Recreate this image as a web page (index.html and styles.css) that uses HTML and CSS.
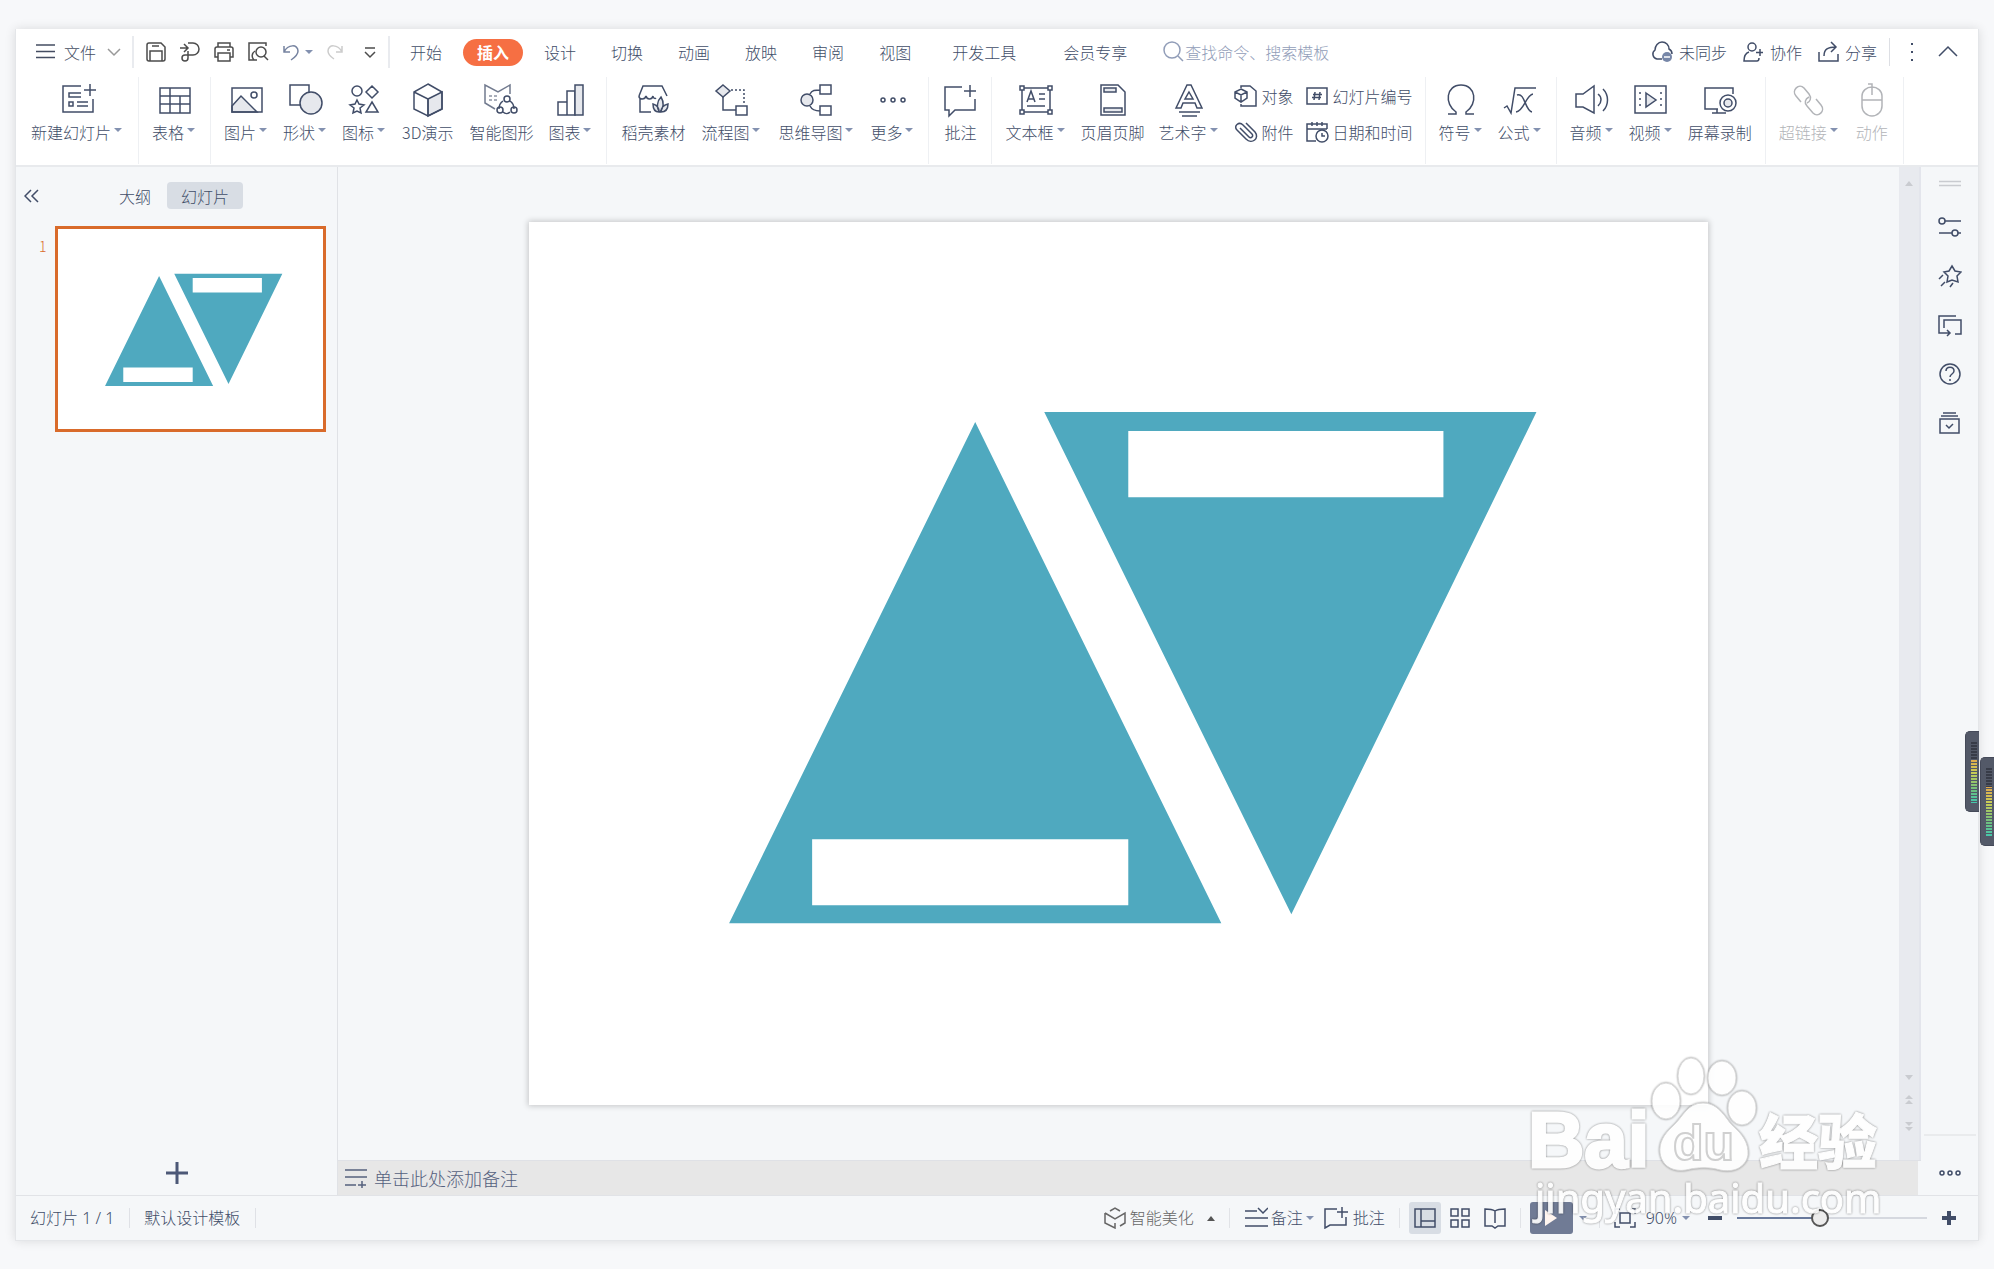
FILE: index.html
```html
<!DOCTYPE html>
<html lang="zh-CN">
<head>
<meta charset="utf-8">
<title>演示文稿</title>
<link rel="stylesheet" href="styles.css">
</head>
<body>
<svg class="defs" aria-hidden="true">
  <symbol id="shapes" viewBox="0 0 1178 883">
    <path fill="#4fa9bf" d="M446 200L692 701H200ZM515 190H1007L762 692Z"/>
    <path fill="#fff" d="M283 617H599V683H283ZM599 209H914V275H599Z"/>
  </symbol>
</svg>
<div class="window">
  <header class="header">
    <div class="menubar">
      <button class="file"><svg width="20" height="20" viewBox="0 0 20 20"><path d="M1 3H20M1 9.500H20M1 15.500H20"/></svg><span>文件</span><svg class="soft" width="14" height="20" viewBox="0 0 14 20"><path d="M1 7l6 6 6-6"/></svg></button>
      <div class="quick">
        <button aria-label="保存"><svg width="22" height="22" viewBox="0 0 22 22"><path d="M2 4a2 2 0 0 1 2-2H16l4 4V18a2 2 0 0 1-2 2H4a2 2 0 0 1-2-2ZM5 20V10H17V20M7 5H14"/></svg></button>
        <button aria-label="输出"><svg width="22" height="22" viewBox="0 0 22 22"><path d="M1 7H8M5 3l4 4-4 4M9 2H14a6 6 0 0 1 0 12H6a3 3 0 1 0 3 3V10"/></svg></button>
        <button aria-label="打印"><svg width="22" height="22" viewBox="0 0 22 22"><path d="M5 6V2H17V6M5 16H2V8a2 2 0 0 1 2-2H18a2 2 0 0 1 2 2V16H17M5 12H17V20H5ZM14 9H17"/></svg></button>
        <button aria-label="打印预览"><svg width="22" height="22" viewBox="0 0 22 22"><path d="M10 19H2V2H19V5M17 15l4 4M7 19C4 16 5 12 8 10"/><circle cx="14" cy="11" r="5"/></svg></button>
        <button aria-label="撤销" class="undo"><svg width="20" height="20" viewBox="0 0 20 20"><path d="M3 4V10H9M3 10C7 2 17 2 17 9c0 4-4 7-7 9"/></svg><i class="caret"></i></button>
        <button aria-label="恢复" class="redo"><svg width="20" height="20" viewBox="0 0 20 20"><path d="M17 4V10H11M17 10C13 2 3 2 3 9c0 3 3 6 6 8"/></svg></button>
        <button aria-label="更多"><svg width="14" height="20" viewBox="0 0 14 20"><path d="M2 6H12M2 10l5 5 5-5"/></svg></button>
      </div>
      <nav class="tabs">
        <button>开始</button><button class="on">插入</button><button>设计</button><button>切换</button><button>动画</button><button>放映</button><button>审阅</button><button>视图</button><button class="long">开发工具</button><button class="long">会员专享</button>
      </nav>
      <label class="search"><svg width="22" height="22" viewBox="0 0 22 22"><circle cx="9" cy="9" r="8"/><path d="M15 15l5 5"/></svg><input type="text" aria-label="搜索" placeholder="查找命令、搜索模板"></label>
      <div class="account">
        <button><svg width="24" height="24" viewBox="0 0 24 24"><path d="M12 19H7a5 5 0 0 1-2-9C5 6 8 2 12 2s7 3 7 7c2 1 3 3 3 5"/><circle cx="17" cy="17" r="5" fill="#7787a8" stroke="none"/><path stroke="#fff" d="M14 17h6"/></svg>未同步</button>
        <button><svg width="22" height="22" viewBox="0 0 22 22"><circle cx="9" cy="6" r="4"/><path d="M6 11c-3 1-5 4-5 9H14c1 0 2-1 2-3M17 8V15M13 11.500H20"/></svg>协作</button>
        <button><svg width="22" height="22" viewBox="0 0 22 22"><path d="M1 11V20H20V13M6 15C6 8 10 6 18 6M13 1l5 5-5 5"/></svg>分享</button>
      </div>
      <button class="dots" aria-label="更多选项"><svg width="6" height="20" viewBox="0 0 6 20"><path class="solid" d="M2 1h2v2h-2zM2 9h2v2h-2zM2 17h2v2h-2z"/></svg></button>
      <button class="fold" aria-label="收起功能区"><svg width="20" height="20" viewBox="0 0 20 20"><path d="M1 14l9-9 9 9"/></svg></button>
    </div>

    <div class="ribbon">
      <div class="group">
        <button class="tool wide"><svg viewBox="0 0 36 36"><path d="M21 4H3V30H33V17M30 2V14M24 8H36M21 11H9V15H21M17 20H28M17 24H28M9 20h4v4h-4z"/></svg><span>新建幻灯片<i class="caret"></i></span></button>
      </div>
      <div class="group">
        <button class="tool"><svg viewBox="0 0 36 36"><path d="M3 6H33V31H3ZM3 14H33M3 22H33M13 6V31M23 14V31"/></svg><span>表格<i class="caret"></i></span></button>
      </div>
      <div class="group">
        <button class="tool"><svg viewBox="0 0 36 36"><path class="tint" d="M3 24l9-10 16 16H3z"/><path d="M3 6H33V30H3Z"/><circle cx="25" cy="13" r="3"/></svg><span>图片<i class="caret"></i></span></button>
        <button class="tool"><svg viewBox="0 0 36 36"><path d="M2 3H21V23H2Z"/><circle class="tint" cx="23" cy="21" r="11"/></svg><span>形状<i class="caret"></i></span></button>
        <button class="tool"><svg viewBox="0 0 36 36"><circle cx="10" cy="9" r="5"/><path d="M25 4l6 6-6 6-6-6zM25 20l6 10H19zM10 18l2 4 5 1-4 3 1 5-4-2-4 2 1-5-4-3 5-1z"/></svg><span>图标<i class="caret"></i></span></button>
        <button class="tool wide"><svg viewBox="0 0 36 36"><path class="tint" d="M18 17l14-7v17l-14 7z"/><path d="M18 2l14 8v17l-14 7-14-7V10zM4 10l14 7v17"/></svg><span>3D演示</span></button>
        <button class="tool wide"><svg viewBox="0 0 36 36"><path d="M27 12V3L15 10 2 3V21l10 6" opacity=".75"/><path stroke-dasharray="3 2" opacity=".6" d="M6 14H15M6 18H15"/><path d="M20 19c-3 2-4 5-4 8M27 19c3 2 4 5 4 8M20 30c2 2 5 2 7 0"/><circle cx="24" cy="17" r="3"/><circle cx="17" cy="28" r="3"/><circle cx="31" cy="28" r="3"/></svg><span>智能图形</span></button>
        <button class="tool"><svg viewBox="0 0 36 36"><path d="M5 20h9v13H5zM14 9h8v24h-8z"/><path class="tint" d="M22 3h8v30h-8z"/></svg><span>图表<i class="caret"></i></span></button>
      </div>
      <div class="group">
        <button class="tool wide"><svg viewBox="0 0 36 36"><path d="M5 17V30H16M4 14L8 4H27l5 10M4 14c0 4 6 4 7 0 1 4 6 4 7 0 0 2 2 3 3 2"/><path class="tint" d="M25 30c-4-4-3-11 1-15 3 5 3 10-1 15zM24 30c-4 0-6-3-6-8 4 1 6 4 6 8zM26 30c0-5 3-7 7-8 0 5-2 8-7 8z"/></svg><span>稻壳素材</span></button>
        <button class="tool wide"><svg viewBox="0 0 36 36"><path class="tint" d="M9 3l7 6-7 6-7-6z"/><path d="M9 15V28H22M22 24H33V33H22Z"/><path stroke-dasharray="2 2" d="M17 8H30V23"/></svg><span>流程图<i class="caret"></i></span></button>
        <button class="tool wide"><svg viewBox="0 0 36 36"><circle class="tint" cx="8" cy="18" r="6"/><path d="M21 3H32V12H21ZM21 24H32V33H21ZM11 12c2-4 5-4 10-4M11 24c2 4 5 5 10 5"/></svg><span>思维导图<i class="caret"></i></span></button>
        <button class="tool"><svg viewBox="0 0 36 36"><circle cx="8" cy="18" r="2"/><circle cx="18" cy="18" r="2"/><circle cx="28" cy="18" r="2"/></svg><span>更多<i class="caret"></i></span></button>
      </div>
      <div class="group">
        <button class="tool"><svg viewBox="0 0 36 36"><path d="M20 5H3V28H7V34l6-6H33V17M28 3V15M22 9H34"/></svg><span>批注</span></button>
      </div>
      <div class="group">
        <button class="tool"><svg viewBox="0 0 36 36"><path d="M4 6H32V30H4ZM9 20l4-11 4 11M10 17h6M21 12H27M21 17H27M9 24H27"/><path fill="#fff" d="M2 4h4v4h-4zM30 4h4v4h-4zM2 28h4v4h-4zM30 28h4v4h-4z"/></svg><span>文本框<i class="caret"></i></span></button>
        <button class="tool"><svg viewBox="0 0 36 36"><path d="M6 3H23l7 7V33H6Z"/><path class="tint" d="M9 6H21V10H9ZM9 26H27V30H9Z"/></svg><span>页眉页脚</span></button>
        <button class="tool"><svg viewBox="0 0 36 36"><path d="M5 26L16 3h4l11 23H26l-2-5H12l-2 5ZM18 10l4 7h-8zM8 30H29M11 34H26"/></svg><span>艺术字<i class="caret"></i></span></button>
        <div class="minis">
          <button><svg viewBox="0 0 24 24"><path d="M7 4V2H16l6 5V22H7V20M7 5l6 3v6l-6 4-6-4V8zM1 8l6 3 6-3M7 11v7"/></svg>对象</button>
          <button><svg viewBox="0 0 24 24"><path d="M2 4H22V20H2ZM10 8l-1 8M15 8l-1 8M8 10.500h9M7 13.500h9"/></svg>幻灯片编号</button>
          <button><svg viewBox="0 0 24 24"><path d="M6 8l9 9c2 2 5-1 3-3L9 5C5 1-1 6 3 10l9 9c6 6 14-1 9-7l-9-9"/></svg>附件</button>
          <button><svg viewBox="0 0 24 24"><path d="M11 21H2V4H22V9M2 9H22M7 2V6M12 2V6M17 2V6"/><circle fill="#fff" cx="17" cy="16" r="6"/><path d="M17 13V16H20"/></svg>日期和时间</button>
        </div>
      </div>
      <div class="group">
        <button class="tool"><svg viewBox="0 0 36 36"><path d="M5 32h8v-2C1 22 3 3 18 3s17 19 5 27v2h8"/></svg><span>符号<i class="caret"></i></span></button>
        <button class="tool"><svg viewBox="0 0 36 36"><path d="M2 26l3-2 4 7 4-25H34M15 13c8-3 8 16 15 17M31 12c-7 1-9 17-17 18"/></svg><span>公式<i class="caret"></i></span></button>
      </div>
      <div class="group">
        <button class="tool"><svg viewBox="0 0 36 36"><path d="M2 12H9L20 4V31L9 25H2ZM24 12c4 3 4 8 0 12M29 7c6 6 6 16 0 22"/></svg><span>音频<i class="caret"></i></span></button>
        <button class="tool"><svg viewBox="0 0 36 36"><path d="M2 4H33V31H2Z"/><path class="tint" d="M13 11l10 7-10 7z"/><path stroke-dasharray="2 4" d="M7 10V27M28 10V27"/></svg><span>视频<i class="caret"></i></span></button>
        <button class="tool"><svg viewBox="0 0 36 36"><path d="M16 27H3V6H31V12M10 31H24M15 27V31"/><circle cx="26" cy="21" r="8" fill="#fff"/><circle class="tint" cx="26" cy="21" r="4"/></svg><span>屏幕录制</span></button>
      </div>
      <div class="group">
        <button class="tool" disabled><svg viewBox="0 0 36 36"><path d="M10 20L5 14C0 8 8 1 13 6l5 6c3 4 1 8-2 9M18 15c-4 2-5 6-2 9l6 7c5 5 13-2 8-8l-5-6"/></svg><span>超链接<i class="caret"></i></span></button>
        <button class="tool" disabled><svg viewBox="0 0 36 36"><path d="M8 14a10 9 0 0 1 20 0V24a10 10 0 0 1-20 0ZM8 18H28M18 13V2H14"/></svg><span>动作</span></button>
      </div>
    </div>
  </header>

  <main class="work">
    <aside class="outline">
      <div class="outline-head">
        <button aria-label="收起"><svg width="16" height="16" viewBox="0 0 16 16"><path d="M7 2L1 8l6 6M14 2L8 8l6 6"/></svg></button>
        <div class="views"><button>大纲</button><button class="on">幻灯片</button></div>
      </div>
      <div class="thumb-row"><span>1</span><div class="thumb"><svg viewBox="0 0 1178 883"><use href="#shapes"/></svg></div></div>
      <button class="add" aria-label="新建幻灯片"><svg width="24" height="24" viewBox="0 0 24 24"><path d="M1 12H23M12 1V23"/></svg></button>
    </aside>
    <section class="editor">
      <div class="stage">
        <div class="canvas"><div class="slide"><svg viewBox="0 0 1178 883"><use href="#shapes"/></svg></div></div>
        <div class="scroll">
          <svg width="10" height="8" viewBox="0 0 10 8"><path d="M1 6l4-5 4 5z"/></svg>
          <svg class="low" width="10" height="60" viewBox="0 0 10 60"><path d="M1 1l4 5 4-5zM1 25l4-4 4 4zM1 30l4-4 4 4zM1 48l4 4 4-4zM1 53l4 4 4-4z"/></svg>
        </div>
      </div>
      <label class="notes"><svg width="22" height="20" viewBox="0 0 22 20"><path d="M0 2H22M0 9H22M0 17H11M13 17H21M17 13V20"/></svg><input type="text" aria-label="备注" placeholder="单击此处添加备注"></label>
    </section>
    <aside class="rail">
      <svg class="grip" width="22" height="8" viewBox="0 0 22 8"><path d="M0 1.500H22M0 5.500H22"/></svg>
      <button aria-label="属性"><svg viewBox="0 0 24 24"><circle cx="4" cy="6" r="3"/><path d="M7 6H23M1 18H14M20 18H23"/><circle cx="17" cy="18" r="3"/></svg></button>
      <button aria-label="动画"><svg viewBox="0 0 24 24"><path d="M14 2l3 5 6 1-4 4 1 6-6-2-5 2 1-6-4-4 5-1zM5 11l-4 4M7 18l-4 4M15 19l-3 4"/></svg></button>
      <button aria-label="切换"><svg viewBox="0 0 24 24"><path d="M18 3H1V20H12M6 15V7H23V21H17M9 17l3 3-3 3"/></svg></button>
      <button aria-label="帮助"><svg viewBox="0 0 24 24"><circle cx="12" cy="12" r="10"/><path d="M8 9c0-5 8-5 8 0 0 3-4 3-4 6M12 17v2"/></svg></button>
      <button aria-label="模板"><svg viewBox="0 0 24 24"><path d="M2 8H21V22H2ZM3 5H20M5 2H18M8 14l3 3 4-4"/></svg></button>
      <button class="end" aria-label="更多"><svg viewBox="0 0 24 24"><circle cx="4" cy="12" r="2"/><circle cx="12" cy="12" r="2"/><circle cx="20" cy="12" r="2"/></svg></button>
    </aside>
  </main>

  <footer class="status">
    <span class="cell">幻灯片 1 / 1</span><span class="cell">默认设计模板</span>
    <div class="controls">
      <button class="beauty"><svg width="22" height="22" viewBox="0 0 22 22"><path d="M6 4l5-3 5 3M1 6l10 6 10-6V16l-5 3M1 6V16l10 5V16"/></svg>智能美化<i class="caret up"></i></button>
      <div class="pair">
        <button><svg width="24" height="22" viewBox="0 0 24 22"><path d="M1 4H13M1 11H24M1 19H24M14 1l5 5 5-5"/></svg>备注<i class="caret"></i></button>
        <button class="comment"><svg width="24" height="22" viewBox="0 0 24 22"><path d="M13 2H1V21l5-3H22V10M18 0V11M13 5H24"/></svg>批注</button>
      </div>
      <div class="modes">
        <button class="on" aria-label="普通视图"><svg width="22" height="22" viewBox="0 0 22 22"><path d="M1 2H21V20H1ZM7 2V20M7 14H21"/></svg></button>
        <button aria-label="幻灯片浏览"><svg width="22" height="22" viewBox="0 0 22 22"><path d="M2 2h7v7h-7zM13 2h7v7h-7zM2 13h7v7h-7zM13 13h7v7h-7z"/></svg></button>
        <button aria-label="阅读视图"><svg width="22" height="22" viewBox="0 0 22 22"><path d="M11 4C8 2 5 2 1 2V19H8l3 2 3-2H21V2C17 2 14 2 11 4ZM11 4V16"/></svg></button>
      </div>
      <div class="play"><button aria-label="放映"><svg width="14" height="18" viewBox="0 0 14 18"><path d="M1 1l12 8-12 8z"/></svg></button><i class="caret"></i></div>
      <div class="zoom">
        <button aria-label="适应窗口"><svg width="22" height="22" viewBox="0 0 22 22"><path d="M1 7V2H6M16 2H21V7M21 15V20H16M6 20H1V15M6 6H16V16H6Z"/></svg></button>
        <button class="percent">90%<i class="caret"></i></button>
        <button class="bold" aria-label="缩小"><svg width="14" height="14" viewBox="0 0 14 14"><path d="M0 7H14"/></svg></button>
        <input type="range" min="0" max="100" value="43" aria-label="缩放">
        <button class="bold" aria-label="放大"><svg width="14" height="14" viewBox="0 0 14 14"><path d="M0 7H14M7 0V14"/></svg></button>
      </div>
    </div>
  </footer>
</div>

<div class="meter back"><i></i></div>
<div class="meter front"><i></i></div>
<svg class="mark" width="370" height="180" viewBox="0 0 370 180">
  <g class="paw"><ellipse cx="141" cy="70" rx="14" ry="18"/><ellipse cx="166" cy="45" rx="13" ry="18"/><ellipse cx="197" cy="47" rx="14" ry="17"/><ellipse cx="217" cy="77" rx="14" ry="17"/><path d="M178 72C162 72 158 86 148 95S134 112 135 122c2 14 14 19 26 17 12-3 24-3 34 0 14 3 26-3 28-15 1-12-6-21-14-28S195 72 178 72Z"/></g>
  <text class="brand" x="3" y="136">Bai</text>
  <text class="du" x="148" y="129">du</text>
  <text class="cn" x="234" y="133">经验</text>
  <text class="url" x="10" y="182">jingyan.baidu.com</text>
</svg>
</body>
</html>
```
FILE: styles.css
```css
* { box-sizing: border-box; }
body {
  margin: 0;
  background: #f7f8fa;
  color: #414d68;
  font: 300 16px/24px "Noto Sans CJK SC", sans-serif;
  overflow: hidden;
}
button, input { font: inherit; color: inherit; background: none; border: 0; padding: 0; margin: 0; outline: 0; }
button { display: flex; align-items: center; white-space: nowrap; }
svg { fill: none; stroke: currentColor; stroke-width: 1.5; flex: none; display: block; }
.defs { position: absolute; width: 0; height: 0; }
.defs symbol { stroke: none; }
.tint { fill: #e6e8ed; }
.solid { fill: currentColor; stroke: none; }
.caret {
  flex: none;
  border: 4px solid transparent;
  border-top-color: #8391b0;
  border-bottom: 0;
}
.caret.up { border-top: 0; border-bottom: 5px solid #555; }

.window {
  min-height: calc(100vh - 57px);
  margin: 29px 15px 28px;
  display: flex;
  flex-direction: column;
  background: #f5f7f9;
  border: 1px solid #e4e6e9;
  border-top: 0;
  box-shadow: 0 0 10px rgba(0, 0, 0, .12);
}

/* header */
.header { background: #fff; border-bottom: 2px solid #e8eaed; }
.menubar { display: flex; align-items: center; height: 46px; padding-right: 20px; }
.file { padding: 0 11px 0 19px; height: 32px; border-right: 2px solid #e9ebef; color: #444d62; }
.file span { margin: 0 11px 0 9px; }
.soft { color: #999; }
.quick { display: flex; align-items: center; gap: 12px; height: 32px; padding: 0 11px; border-right: 2px solid #e9ebef; color: #4c4c4c; }
.undo { color: #7683a0; gap: 4px; }
.redo { color: #ccc; margin-right: 6px; }
.tabs { display: flex; gap: 7px; margin-left: 6px; }
.tabs button { height: 27px; padding: 0 14px; border-radius: 14px; }
.tabs .long { padding: 0 20px; }
.tabs .on { background: #f66f43; color: #fff; font-weight: 700; }
.search { display: flex; align-items: center; flex: 1; margin-left: 16px; color: #919db8; }
.search input { width: 180px; height: 24px; }
input::placeholder { color: inherit; opacity: 1; }
.account { display: flex; gap: 16px; height: 28px; padding-right: 12px; border-right: 1px solid #dddfe4; }
.account button { gap: 5px; }
.dots { margin-left: 19px; }
.fold { margin-left: 23px; }

.ribbon { display: flex; height: 90px; }
.group { display: flex; height: 87px; margin-top: 2px; padding: 0 6px; border-right: 1px solid #eef0f3; }
.group:first-child { padding-left: 7px; }
.tool { display: flex; flex-direction: column; padding: 5px 7px 0; }
.tool.wide { padding: 5px 8px 0; }
.tool > svg { width: 36px; height: 36px; }
.tool span { display: flex; align-items: center; margin-top: 2px; }
.tool .caret { margin: 0 2px 4px 3px; }
.tool:disabled { color: #b2b4b8; }
.minis { display: grid; grid-template-columns: auto auto; grid-auto-rows: 36px; column-gap: 11px; padding: 1px 6px 0 7px; height: 74px; }
.minis svg { width: 24px; height: 24px; }
.minis button { gap: 4px; }

/* work area */
.work { flex: 1; display: flex; }
.outline { width: 322px; flex: none; display: flex; flex-direction: column; border-right: 1px solid #e0e2e6; }
.outline-head { display: flex; align-items: center; padding: 15px 8px; }
.views { display: flex; gap: 16px; margin-left: 79px; }
.views button { height: 27px; }
.views .on { padding: 0 14px; border-radius: 4px; background: #d8dde4; }
.thumb-row { display: flex; padding: 2px 11px 0 23px; color: #d96b2b; font-size: 14px; line-height: 40px; }
.thumb-row span { width: 16px; }
.thumb { flex: 1; height: 206px; padding: 3px; background: #fff; border: 3px solid #d96b2b; }
.thumb svg, .slide svg { width: 100%; height: 100%; }
.add { margin: auto auto 10px; color: #4c5877; }
.add svg { stroke-width: 3; }
.editor { flex: 1; display: flex; flex-direction: column; min-width: 0; }
.stage { flex: 1; display: flex; border-bottom: 1px solid #dfe1e6; }
.canvas { flex: 1; display: grid; place-items: center; }
.slide { width: 75.5%; aspect-ratio: 1178 / 883; background: #fff; box-shadow: 0 0 6px 1px rgba(0, 0, 0, .2); }
.scroll { width: 22px; display: flex; flex-direction: column; justify-content: space-between; padding: 13px 0 26px 5px; background: #e8eaef; border-right: 2px solid #e3e5ec; }
.scroll svg { fill: #c9cbd0; stroke: none; }
.notes { display: flex; align-items: center; gap: 7px; height: 34px; margin-right: 3px; padding-left: 7px; background: #e7e7e7; color: #55617e; font-size: 18px; }
.notes input { flex: 1; }
.rail { width: 57px; display: flex; flex-direction: column; align-items: center; gap: 25px; padding-top: 13px; }
.rail button { justify-content: center; }
.rail button svg { width: 24px; height: 24px; }
.rail .grip { color: #c9cbd0; margin-bottom: 2px; }
.rail .end { width: 52px; height: 61px; margin-top: auto; padding-top: 14px; border-top: 2px solid #e9ebed; }

/* status bar */
.status { display: flex; align-items: center; height: 45px; border-top: 1px solid #e1e3e7; padding-right: 22px; font-family: "Noto Sans", "Noto Sans CJK SC", sans-serif; }
.cell { height: 20px; line-height: 20px; padding: 0 15px 0 14px; border-right: 1px solid #dfe1e6; }
.controls { display: flex; align-items: center; margin-left: auto; }
.beauty { gap: 4px; padding-right: 14px; color: #666; }
.beauty .caret { margin-left: 9px; }
.pair { display: flex; gap: 10px; padding: 0 14px; border: solid #e1e3e7; border-width: 0 1px; height: 20px; }
.pair button { gap: 3px; }
.pair .comment { gap: 5px; }
.modes { display: flex; gap: 3px; padding: 0 9px; border-right: 1px solid #e1e3e7; height: 20px; align-items: center; }
.modes button { width: 32px; height: 32px; justify-content: center; }
.modes .on { background: #d8dde4; border-radius: 3px; }
.play { display: flex; align-items: center; gap: 6px; height: 20px; padding: 0 12px 0 9px; border-right: 1px solid #e1e3e7; }
.play button { width: 43px; height: 32px; justify-content: center; background: #707b95; border-radius: 3px; }
.play svg { fill: #fff5ef; stroke: none; }
.zoom { display: flex; align-items: center; padding-left: 14px; }
.percent { gap: 5px; margin: 0 18px 0 10px; }
.bold svg { stroke-width: 4; }
.zoom input { appearance: none; width: 190px; height: 20px; margin: 0 15px; background: linear-gradient(90deg, #68799c 43%, #d5d8df 43%) center / 100% 2px no-repeat; }
.zoom input::-webkit-slider-thumb { appearance: none; width: 18px; height: 18px; border-radius: 50%; background: #ececec; border: 2px solid #555; }

/* floating level meters */
.meter { position: absolute; width: 14px; background: #535968; border: 1px solid #454a59; border-right: 0; border-radius: 5px 0 0 5px; padding: 10px 2px 8px 5px; }
.meter i {
  display: block;
  height: 100%;
  background:
    repeating-linear-gradient(transparent 0 2px, #535968 2px 3px),
    linear-gradient(#383c48 28%, #e0a84c 28%, #c9cc55 50%, #6fbf7d 78%, #43c7ae);
}
.back { right: 15px; top: 731px; height: 81px; }
.front { right: 0; top: 757px; height: 89px; }

/* watermark */
.mark { position: absolute; right: 99px; bottom: 58px; overflow: visible; filter: drop-shadow(0 0 1px rgba(0, 0, 0, .5)); opacity: .9; fill: #fff; stroke: none; }
.paw { stroke: #d5d5d5; stroke-width: 1; }
.brand { font: 700 78px "Liberation Sans", sans-serif; stroke: #fff; stroke-width: 3; }
.du { font: 700 50px "Liberation Sans", sans-serif; stroke: #ccc; stroke-width: 2; }
.cn { font: 900 59px "Noto Sans CJK SC", sans-serif; stroke: #fff; stroke-width: 1; }
.url { font: 400 40px "Noto Sans", sans-serif; stroke: #fff; stroke-width: 1; }
```
